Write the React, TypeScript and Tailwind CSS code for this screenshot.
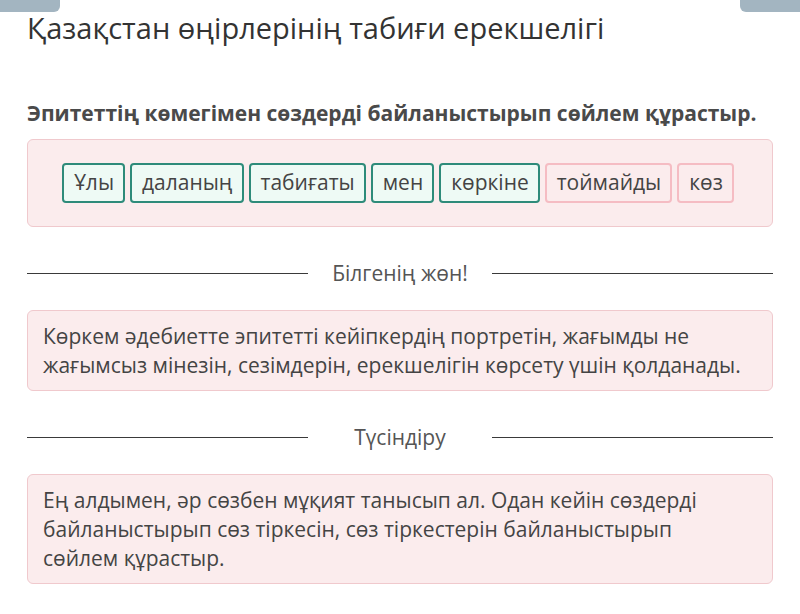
const words: { text: string; ok: boolean }[] = [
  { text: "Ұлы", ok: true },
  { text: "даланың", ok: true },
  { text: "табиғаты", ok: true },
  { text: "мен", ok: true },
  { text: "көркіне", ok: true },
  { text: "тоймайды", ok: false },
  { text: "көз", ok: false },
]

function Divider({ label }: { label: string }) {
  return (
    <div className="flex h-7 items-center">
      <div className="h-px flex-1 bg-[#3a3a3a]" />
      <span className="w-[184px] text-center text-[21px] leading-7 text-[#555]">{label}</span>
      <div className="h-px flex-1 bg-[#3a3a3a]" />
    </div>
  )
}

export default function App() {
  return (
    <div className="relative h-[614px] w-[800px] overflow-hidden bg-white font-['Open_Sans',sans-serif]">
      {/* corner tabs */}
      <div className="absolute left-0 top-0 h-3 w-[60px] rounded-br-md bg-[#a3b5c1]" />
      <div className="absolute right-0 top-0 h-3 w-[60px] rounded-bl-md bg-[#a3b5c1]" />

      <div className="px-[27px] pt-[10px]">
        <h1 className="text-[29px] leading-9 text-[#333]">Қазақстан өңірлерінің табиғи ерекшелігі</h1>

        <p className="mt-[53px] text-[21px] font-bold leading-7 text-[#4a4a4a]">
          Эпитеттің көмегімен сөздерді байланыстырып сөйлем құрастыр.
        </p>

        <div className="mt-[12px] flex h-[88px] items-center justify-center gap-[5px] rounded-md border border-[#f0c9cd] bg-[#fbeced] pr-[4px]">
          {words.map((w) => (
            <div
              key={w.text}
              className={
                w.ok
                  ? "flex h-10 items-center rounded border-2 border-[#2e8b7a] bg-[#eefaf5] pl-[10px] pr-[9px] text-[21px] text-[#444]"
                  : "flex h-10 items-center rounded border-2 border-[#f5bcc3] bg-[#fbeced] pl-[10px] pr-[9px] text-[21px] text-[#444]"
              }
            >
              {w.text}
            </div>
          ))}
        </div>

        <div className="mt-[32px]">
          <Divider label="Білгенің жөн!" />
        </div>

        <div className="mt-[23px] rounded-md border border-[#f0c9cd] bg-[#fbeced] pb-[10px] pl-[15px] pr-[12px] pt-[11px] text-[21px] leading-[29px] text-[#444]">
          Көркем әдебиетте эпитетті кейіпкердің портретін, жағымды не жағымсыз мінезін, сезімдерін, ерекшелігін көрсету үшін қолданады.
        </div>

        <div className="mt-[32px]">
          <Divider label="Түсіндіру" />
        </div>

        <div className="mt-[23px] rounded-md border border-[#f0c9cd] bg-[#fbeced] pb-[10px] pl-[15px] pr-[40px] pt-[11px] text-[21px] leading-[29px] text-[#444]">
          Ең алдымен, әр сөзбен мұқият танысып ал. Одан кейін сөздерді байланыстырып сөз тіркесін, сөз тіркестерін байланыстырып сөйлем құрастыр.
        </div>
      </div>
    </div>
  )
}
